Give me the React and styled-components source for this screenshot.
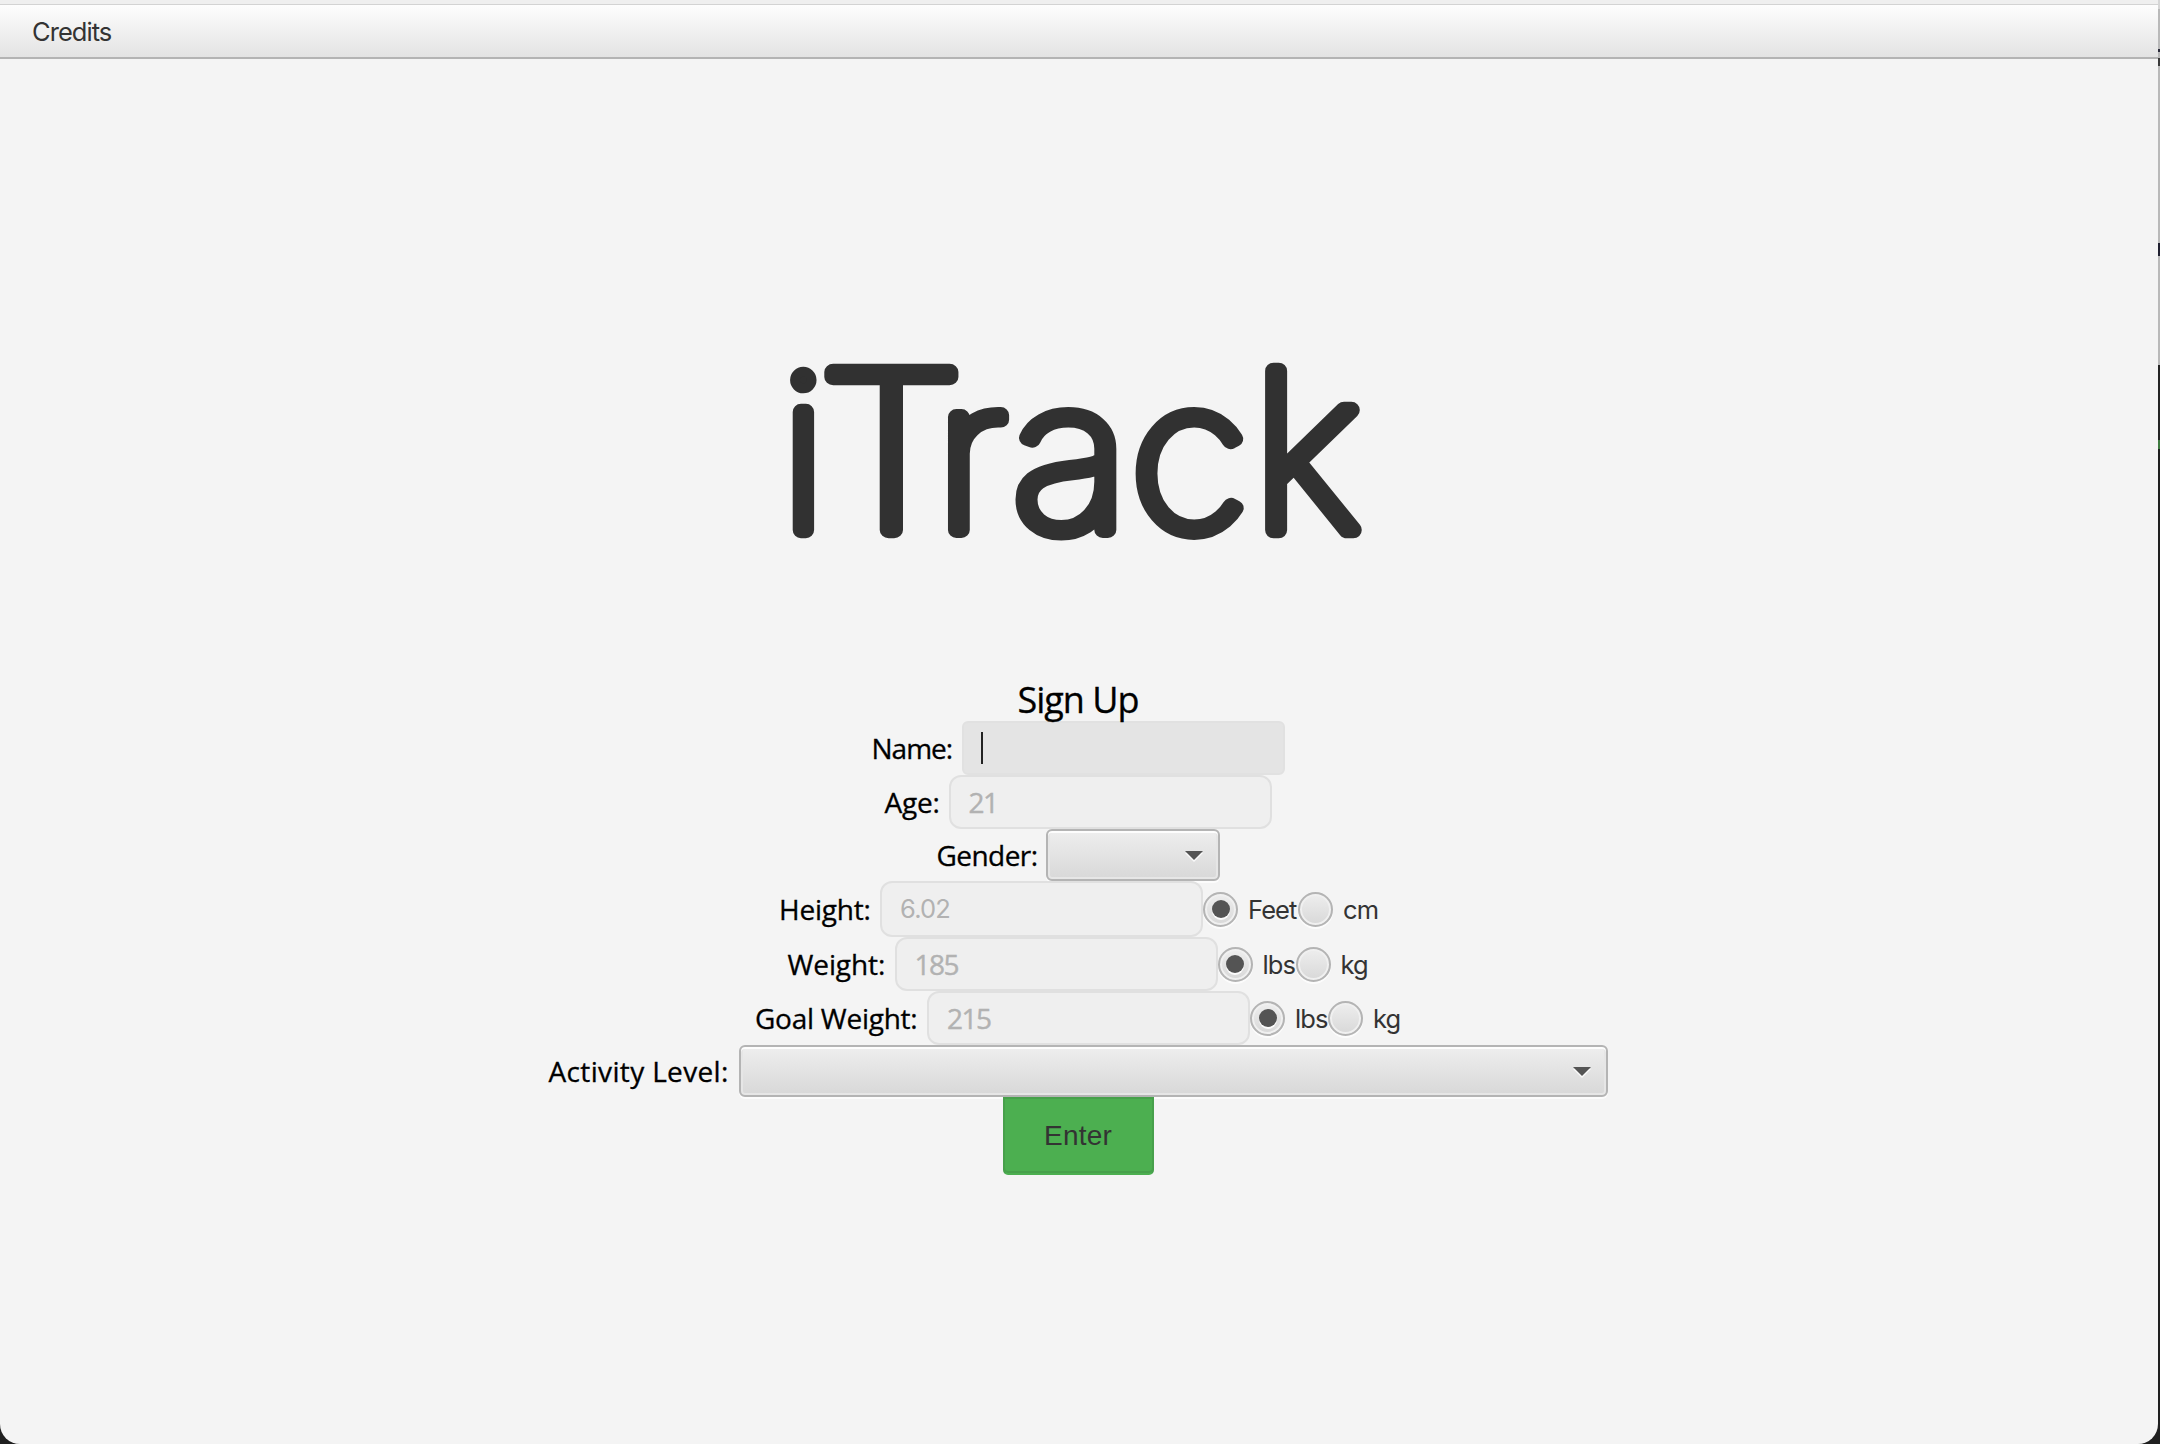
import React from "react";
import styled, { createGlobalStyle } from "styled-components";

const ui = `Inter, "Liberation Sans", sans-serif`;
const humanist = `"Open Sans", "Noto Sans", sans-serif`;

const GlobalStyle = createGlobalStyle`
  * { box-sizing: border-box; }
  html, body { margin: 0; background: #1f1f1f; }
`;

const Desktop = styled.div`
  display: grid;
  grid-template-columns: 2158px 2px;
  width: 2160px;
  height: 1444px;
  overflow: hidden;
  background: #1f1f1f;
`;

const Window = styled.main`
  display: flex;
  flex-direction: column;
  height: 1444px;
  background: #f4f4f4;
  border-radius: 0 0 20px 20px;
  overflow: hidden;
`;

const Backdrop = styled.aside`
  display: flex;
  flex-direction: column;
`;

const Slice = styled.div`
  height: ${(p) => p.$h}px;
  background: ${(p) => p.$fill};
`;

const TitleEdge = styled.div`
  height: 5px;
  background: #efefef;
  border-bottom: 1px solid #d3d3d3;
`;

const MenuBar = styled.nav`
  display: flex;
  align-items: center;
  height: 54px;
  padding: 2px 0 0 32px;
  border-bottom: 2px solid #b4b4b4;
  background: linear-gradient(#fdfdfd, #e3e3e3);
`;

const MenuItem = styled.span`
  font: 400 25.5px/30px ${ui};
  letter-spacing: -0.95px;
  color: #333;
`;

const Content = styled.section`
  display: flex;
  flex-direction: column;
  align-items: center;
  padding-top: 281px;
`;

const Logo = styled.svg`
  display: block;
  width: 600px;
  height: 220px;
  overflow: visible;
  text {
    font-family: Inter, sans-serif;
    font-weight: 100;
    font-size: 217px;
    fill: #313131;
    stroke: #313131;
    stroke-width: 16.5px;
    stroke-linejoin: round;
    stroke-linecap: round;
  }
`;

const Form = styled.form`
  display: flex;
  flex-direction: column;
  align-items: center;
  margin: 118px 2px 0 0;
`;

const Title = styled.h1`
  position: relative;
  z-index: 1;
  margin: 0;
  height: 43px;
  font: 400 36px/43px ${humanist};
  letter-spacing: -1px;
  -webkit-text-stroke: 0.3px #000;
  color: #000;
`;

const Row = styled.div`
  display: flex;
  align-items: center;
  height: ${(p) => p.$h}px;
`;

const Label = styled.label`
  width: ${(p) => p.$w}px;
  font: 400 28px/34px ${humanist};
  letter-spacing: ${(p) => p.$track}px;
  -webkit-text-stroke: 0.3px #000;
  white-space: nowrap;
  color: #000;
`;

const Field = styled.div`
  display: flex;
  align-items: center;
  width: 323px;
  height: 100%;
  padding-left: 18px;
  border: 2px solid ${(p) => (p.$focused ? "#e1e1e1" : "#e0e0e0")};
  border-radius: ${(p) => (p.$focused ? 6 : 12)}px;
  background: ${(p) => (p.$focused ? "#e4e4e4" : "#efefef")};
  font: 400 ${(p) => (p.$ui ? "25.5px" : "28px")}/34px ${(p) => (p.$ui ? ui : humanist)};
  letter-spacing: ${(p) => p.$track || 0}px;
  -webkit-text-stroke: ${(p) => (p.$ui ? 0 : 0.4)}px #b2b2b2;
  color: #b2b2b2;
`;

const Caret = styled.span`
  width: 2px;
  height: 32px;
  margin-left: -1px;
  background: #222;
`;

const Combo = styled.div`
  display: flex;
  align-items: center;
  justify-content: flex-end;
  width: ${(p) => p.$w}px;
  height: 52px;
  padding-right: 15px;
  border: 2px solid #b4b4b4;
  border-radius: 6px;
  background: linear-gradient(#eeeeee, #d8d8d8);
  box-shadow: inset 0 2px 0 #fdfdfd, inset 0 0 0 2px #e6e6e6, 0 2px 0 #fcfcfc;
`;

const Arrow = styled.svg`
  display: block;
  width: 18px;
  height: 12px;
  margin-top: 2px;
`;

const Radio = styled.label`
  display: flex;
  align-items: center;
  width: ${(p) => p.$w}px;
  height: 36px;
  font: 400 25.5px/30px ${ui};
  letter-spacing: ${(p) => p.$track}px;
  white-space: nowrap;
  color: #333;
`;

const RadioText = styled.span`
  padding-top: 2px;
`;

const Dial = styled.span`
  display: flex;
  flex: none;
  align-items: center;
  justify-content: center;
  width: 35px;
  height: 35px;
  margin-right: 10px;
  border: 2px solid #b4b4b4;
  border-radius: 50%;
  background: linear-gradient(#eeeeee, #d8d8d8);
  box-shadow: inset 0 0 0 2px #f0f0f0, 0 2px 0 #fcfcfc;
`;

const Dot = styled.span`
  width: 18px;
  height: 18px;
  border-radius: 50%;
  background: #545454;
  box-shadow: 0 2px 0 #fcfcfc;
`;

const Button = styled.button`
  width: 151px;
  height: 78px;
  padding: 0;
  border: 2px solid #47a04b;
  border-bottom-color: #4caf50;
  border-radius: 0 0 5px 5px;
  background: #4caf50;
  box-shadow: inset 0 -2px 0 #47a04b;
  font: 400 28px/32px "Liberation Sans", Arial, sans-serif;
  letter-spacing: 0.2px;
  color: #333;
`;

const ArrowIcon = () => (
  <Arrow viewBox="0 0 18 12">
    <path d="M0 3H18L9 12Z" fill="#fafafa" />
    <path d="M0 1H18L9 10Z" fill="#545454" />
  </Arrow>
);

const RadioOption = ({ text, checked, w, track }) => (
  <Radio $w={w} $track={track}>
    <Dial>{checked && <Dot />}</Dial>
    <RadioText>{text}</RadioText>
  </Radio>
);

const letters = [
  { char: "i", x: 1, sx: 1, sy: 1 },
  { char: "T", x: 39.5, sx: 1.09, sy: 1 },
  { char: "r", x: 156, sx: 1.02, sy: 0.955 },
  { char: "a", x: 233, sx: 1.03, sy: 0.955 },
  { char: "c", x: 351, sx: 1.02, sy: 0.955 },
  { char: "k", x: 473, sx: 1.03, sy: 1.01 },
];

export default function App() {
  return (
    <>
      <GlobalStyle />
      <Desktop>
        <Window>
          <TitleEdge />
          <MenuBar>
            <MenuItem>Credits</MenuItem>
          </MenuBar>
          <Content>
            <Logo viewBox="0 0 600 220" role="img" aria-label="iTrack">
              {letters.map((l) => (
                <text key={l.char} transform={`translate(${l.x} 189.5) scale(${l.sx} ${l.sy})`}>
                  {l.char}
                </text>
              ))}
            </Logo>
            <Form onSubmit={(e) => e.preventDefault()}>
              <Title>Sign Up</Title>
              <Row $h={54}>
                <Label $w={90} $track={-1}>Name:</Label>
                <Field $focused><Caret /></Field>
              </Row>
              <Row $h={54}>
                <Label $w={64} $track={-0.2}>Age:</Label>
                <Field $track={-1.5}>21</Field>
              </Row>
              <Row $h={52}>
                <Label $w={109} $track={-0.55}>Gender:</Label>
                <Combo $w={174}><ArrowIcon /></Combo>
              </Row>
              <Row $h={56}>
                <Label $w={101} $track={-0.2}>Height:</Label>
                <Field $ui $track={-0.8}>6.02</Field>
                <RadioOption text="Feet" checked w={95} track={-0.9} />
                <RadioOption text="cm" w={79} track={-0.9} />
              </Row>
              <Row $h={54}>
                <Label $w={107} $track={-0.1}>Weight:</Label>
                <Field $track={-1.5}>185</Field>
                <RadioOption text="lbs" checked w={78} track={-0.9} />
                <RadioOption text="kg" w={73} track={-0.9} />
              </Row>
              <Row $h={54}>
                <Label $w={172} $track={-0.25}>Goal Weight:</Label>
                <Field $track={-1.5}>215</Field>
                <RadioOption text="lbs" checked w={78} track={-0.9} />
                <RadioOption text="kg" w={73} track={-0.9} />
              </Row>
              <Row $h={52}>
                <Label $w={190} $track={0.35}>Activity Level:</Label>
                <Combo $w={869}><ArrowIcon /></Combo>
              </Row>
              <Button type="submit">Enter</Button>
            </Form>
          </Content>
        </Window>
        <Backdrop>
          <Slice $h={9} $fill="#d6d6d6" />
          <Slice $h={40} $fill="#b9b9b9" />
          <Slice $h={3} $fill="#2a2a3a" />
          <Slice $h={6} $fill="#b9b9b9" />
          <Slice $h={8} $fill="#3a3a3a" />
          <Slice $h={177} $fill="#b9b9b9" />
          <Slice $h={13} $fill="#202030" />
          <Slice $h={109} $fill="#b9b9b9" />
          <Slice $h={75} $fill="#242424" />
          <Slice $h={9} $fill="#3f7a40" />
          <Slice $h={995} $fill="#1f1f1f" />
        </Backdrop>
      </Desktop>
    </>
  );
}
